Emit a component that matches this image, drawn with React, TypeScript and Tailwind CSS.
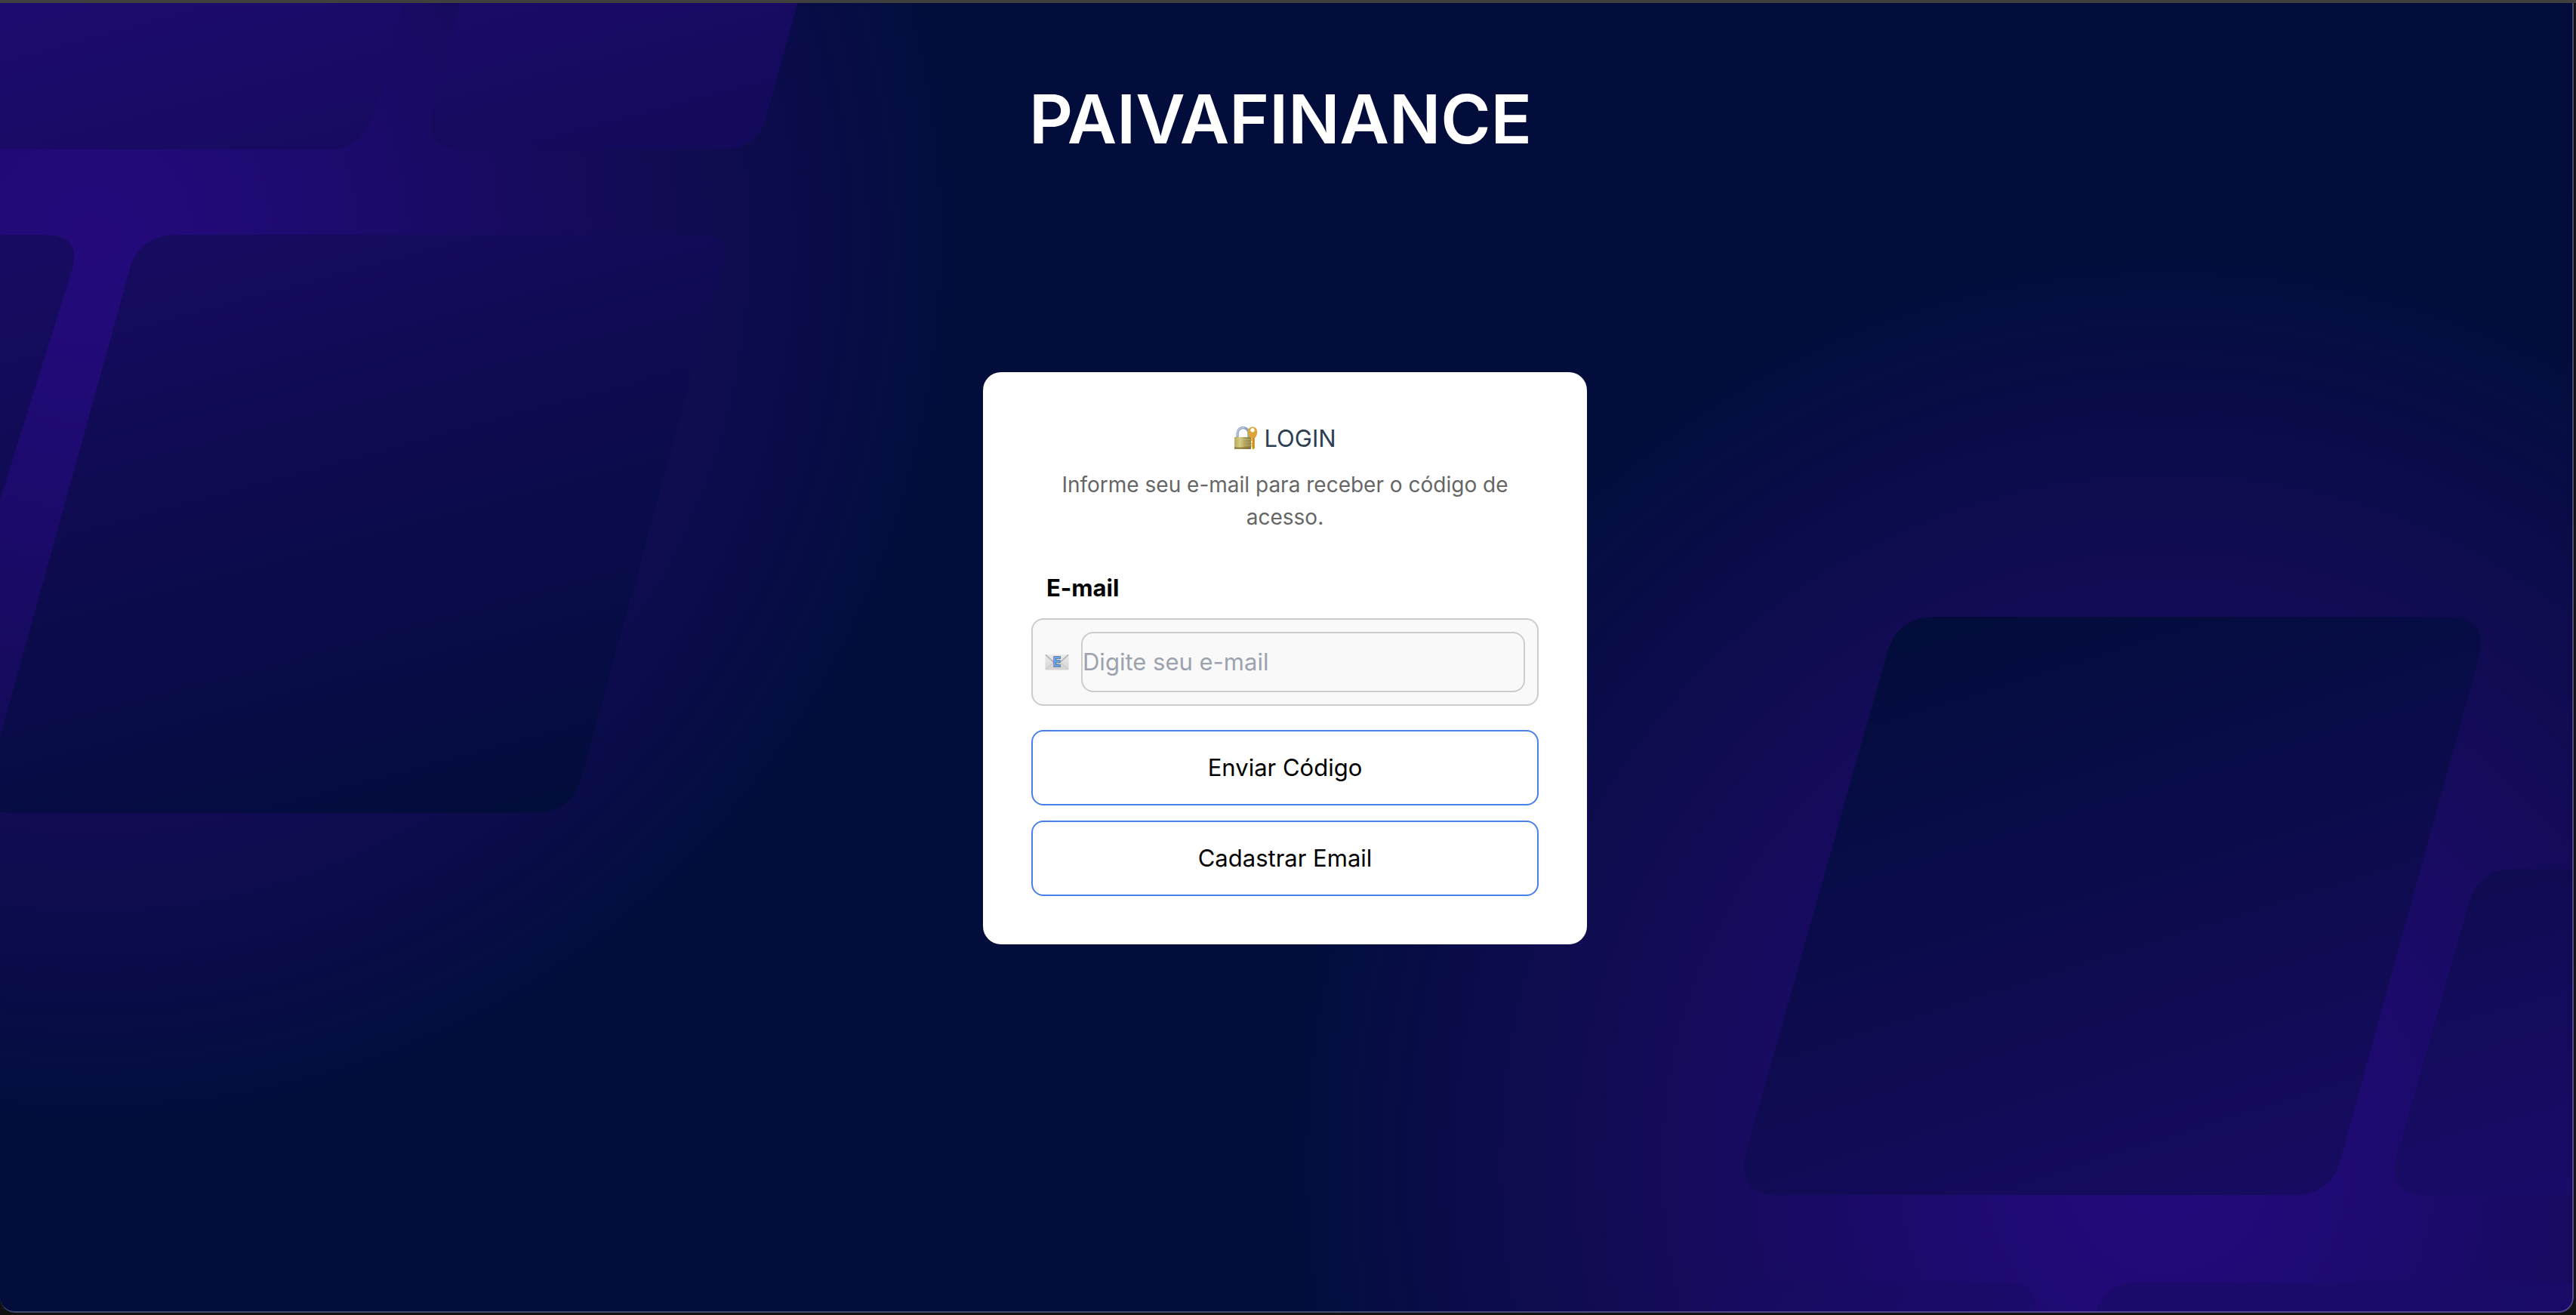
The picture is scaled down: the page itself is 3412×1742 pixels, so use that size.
import { useState } from "react";

function Backdrop() {
  return (
    <svg
      className="absolute inset-0 h-full w-full"
      viewBox="0 4 3409 1735"
      preserveAspectRatio="xMidYMid slice"
      aria-hidden="true"
    >
      <defs>
        <radialGradient id="glow">
          <stop offset="0" stopColor="#240a7c" />
          <stop offset="0.15" stopColor="#210a76" />
          <stop offset="0.35" stopColor="#1b0a69" />
          <stop offset="0.6" stopColor="#130b57" />
          <stop offset="0.74" stopColor="#0e0c4f" />
          <stop offset="0.87" stopColor="#080c46" />
          <stop offset="0.96" stopColor="#040e40" />
          <stop offset="1" stopColor="#020d3c" />
        </radialGradient>
        <linearGradient id="leftPanel" gradientUnits="userSpaceOnUse" x1="184" y1="311" x2="416" y2="1176">
          <stop offset="0" stopColor="#160b60" />
          <stop offset="0.4" stopColor="#0e0b50" />
          <stop offset="0.75" stopColor="#070c45" />
          <stop offset="1" stopColor="#020d3a" />
        </linearGradient>
        <linearGradient id="topPanel" gradientUnits="userSpaceOnUse" x1="0" y1="0" x2="102" y2="380">
          <stop offset="0" stopColor="#1e0b70" />
          <stop offset="1" stopColor="#140a5b" />
        </linearGradient>
        <linearGradient id="rightPanel" gradientUnits="userSpaceOnUse" x1="2514" y1="817" x2="2780" y2="1660">
          <stop offset="0" stopColor="#020d3a" />
          <stop offset="0.3" stopColor="#070c46" />
          <stop offset="0.62" stopColor="#0f0b51" />
          <stop offset="1" stopColor="#160b60" />
        </linearGradient>
        <linearGradient id="edgePanel" gradientUnits="userSpaceOnUse" x1="3280" y1="1151" x2="3400" y2="1600">
          <stop offset="0" stopColor="#0f0b51" />
          <stop offset="1" stopColor="#190b69" />
        </linearGradient>
      </defs>
      <rect x="-600" y="-600" width="4612" height="2942" fill="#020d3c" />
      <ellipse cx="122" cy="316" rx="1145" ry="1170" fill="url(#glow)" />
      <ellipse cx="2870" cy="1545" rx="1160" ry="1205" fill="url(#glow)" />
      <g fill="url(#topPanel)">
        <path d="M-300 -60 H553 L494 152 Q481 198 432 198 H-300 Z" />
        <path d="M627 -60 L573 138 Q557 198 610 198 H955 Q1003 198 1015 154 L1074 -60 Z" />
      </g>
      <g fill="url(#leftPanel)">
        <path d="M-300 311 H60 Q108 311 96 356 L-130 1077 H-300 Z" />
        <path d="M236 311 H916 Q980 311 956 354 L770 1031 Q757 1077 708 1077 H20 Q-38 1077 -15 1031 L172 356 Q184 311 236 311 Z" />
      </g>
      <path
        d="M2564 817 H3240 Q3298 817 3283 872 L3100 1537 Q3087 1583 3040 1583 H2355 Q2298 1583 2313 1525 L2500 863 Q2514 817 2564 817 Z"
        fill="url(#rightPanel)"
      />
      <g fill="url(#edgePanel)">
        <path d="M3330 1151 H3700 V1583 H3215 Q3160 1583 3175 1530 L3270 1197 Q3283 1151 3330 1151 Z" />
        <path d="M2320 1698 H2650 Q2706 1698 2692 1742 L2640 1930 H2210 L2262 1742 Q2275 1698 2320 1698 Z" opacity="0.6" />
        <path d="M2836 1698 H3700 V1930 H2723 L2775 1742 Q2787 1698 2836 1698 Z" opacity="0.75" />
      </g>
    </svg>
  );
}

function LockIcon() {
  return (
    <svg className="h-8 w-8 shrink-0" viewBox="0 0 32 32" aria-hidden="true">
      <defs>
        <linearGradient id="brass" x1="0" x2="1" y1="0" y2="0">
          <stop offset="0" stopColor="#b5a757" />
          <stop offset="0.35" stopColor="#d8cf86" />
          <stop offset="0.6" stopColor="#b0a260" />
          <stop offset="1" stopColor="#8e7c3a" />
        </linearGradient>
      </defs>
      <path d="M5 14 V9 a7.5 7.5 0 0 1 15 0 V14" fill="none" stroke="#8ea3bd" strokeWidth="3.4" />
      <path d="M4.6 13 V9 a8 8 0 0 1 10 -7.4" fill="none" stroke="#c4d3e4" strokeWidth="1.2" />
      <rect x="1" y="14" width="22" height="16" rx="1" fill="url(#brass)" />
      <path d="M1 17.5 H23 M1 21 H23 M1 24.5 H23" stroke="#cfc47c" strokeWidth="0.6" />
      <path d="M1 28.6 H23" stroke="#7d6d33" strokeWidth="1.6" />
      <path
        fillRule="evenodd"
        d="M25 0.5 C29.5 0.5 31.5 4 31.2 8 C31 12 29.5 13.5 28 15.5 V28.5 L26 30.8 L24.3 29 V27 L22.8 25.5 L24.3 24 L22.8 22.3 L24.3 20.8 V19.5 L22.8 18 L23.8 15.5 C20 13.5 18.4 11 18.6 7.5 C18.8 3.5 21 0.5 25 0.5 Z M25 2 a2.8 2.8 0 1 0 0.01 0 Z"
        fill="#dba637"
      />
      <path d="M26.6 15 V29" stroke="#b57f1e" strokeWidth="0.9" />
    </svg>
  );
}

function MailIcon() {
  return (
    <svg className="h-8 w-8 shrink-0" viewBox="0 0 32 32" aria-hidden="true">
      <defs>
        <linearGradient id="paper" x1="0" x2="0" y1="0" y2="1">
          <stop offset="0" stopColor="#ebebeb" />
          <stop offset="1" stopColor="#d3d3d3" />
        </linearGradient>
      </defs>
      <rect x="0.5" y="6" width="31" height="20.5" fill="url(#paper)" />
      <path d="M1 26 L12.5 16 M31 26 L19.5 16" stroke="#c2c2c2" strokeWidth="0.9" />
      <path d="M1 6.5 L13 17.5 Q16 20 19 17.5 L31 6.5" fill="none" stroke="#a3a3a3" strokeWidth="1.1" />
      <g textAnchor="middle" fontFamily="Inter, sans-serif" fontWeight="700" fontSize="17">
        <text x="16" y="22" fill="#62a4f5" stroke="#5b6f88" strokeWidth="1.4" paintOrder="stroke">
          E
        </text>
      </g>
    </svg>
  );
}

export default function App() {
  const [email, setEmail] = useState("");
  const buttonClass =
    "h-[100px] w-full cursor-pointer rounded-2xl border-2 border-[#4a80ec] bg-white text-[31px] leading-[48px] text-black";

  return (
    <div className="flex min-h-screen flex-col border-t-4 border-[#3f3f3e] bg-[#121212] pr-[3px] pb-[3px] font-['Inter',sans-serif]">
      <main className="relative grid flex-1 grid-rows-[1fr_auto_1fr] justify-items-center overflow-hidden rounded-b-[20px] pr-[5px]">
        <Backdrop />
        <header className="relative pt-[100px] pr-3">
          <h1 className="font-['Inter',sans-serif] text-[90px] leading-[108px] font-semibold text-white">
            PAIVAFINANCE
          </h1>
        </header>

        <form
          className="relative flex w-[800px] flex-col rounded-3xl bg-white p-16"
          onSubmit={(e) => e.preventDefault()}
        >
          <h2 className="flex items-center justify-center gap-2 text-[31px] leading-[48px] text-[#2c3e50]">
            <LockIcon />
            LOGIN
          </h2>
          <p className="mt-4 text-center text-[28px] leading-[43px] text-[#666666]">
            Informe seu e-mail para receber o código de acesso.
          </p>

          <label htmlFor="email" className="mt-12 pl-5 text-[31px] leading-[48px] font-bold text-black">
            E-mail
          </label>
          <div className="mt-4 flex h-[116px] items-center gap-4 rounded-2xl border-2 border-[#cccccc] bg-[#f9f9f9] px-4">
            <MailIcon />
            <input
              id="email"
              type="email"
              value={email}
              onChange={(e) => setEmail(e.target.value)}
              placeholder="Digite seu e-mail"
              className="h-20 min-w-0 flex-1 rounded-2xl border-2 border-[#cccccc] bg-transparent text-[31px] text-black placeholder:text-[#9ca3af]"
            />
          </div>

          <div className="mt-8 flex flex-col gap-5">
            <button type="submit" className={buttonClass}>
              Enviar Código
            </button>
            <button type="button" className={buttonClass}>
              Cadastrar Email
            </button>
          </div>
        </form>

        <div className="pointer-events-none absolute inset-0 rounded-b-[20px] border-r-2 border-b-2 border-white/25" />
      </main>
    </div>
  );
}
